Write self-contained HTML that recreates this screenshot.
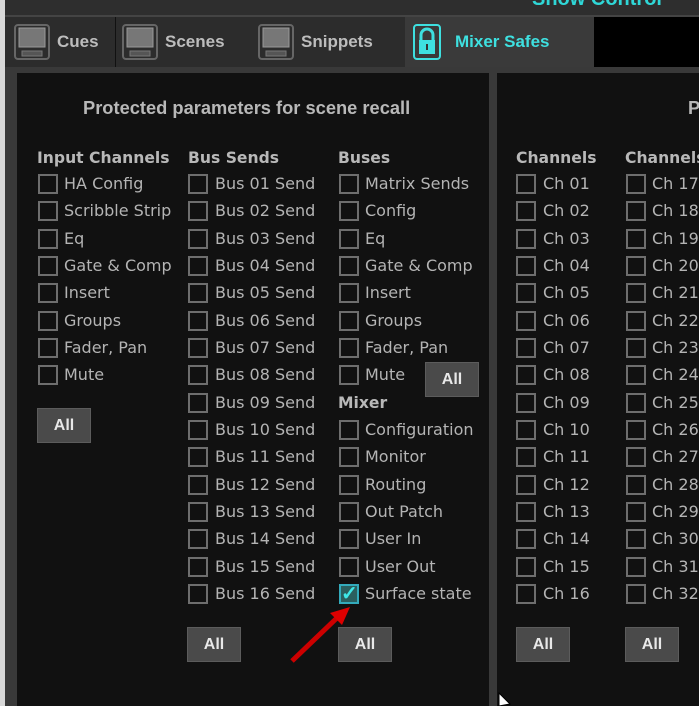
<!DOCTYPE html>
<html><head><style>
*{margin:0;padding:0;box-sizing:border-box}
body{width:699px;height:706px;overflow:hidden;background:#2b2b2b;position:relative;font-family:"DejaVu Sans",sans-serif}
.a{position:absolute}
.cb{position:absolute;width:20px;height:20px;border:2px solid #6e6e6e}
.t{position:absolute;color:#b4b4b4;font-size:16px;line-height:20px;white-space:nowrap}
.h{position:absolute;color:#b8b8b8;font-size:15.6px;font-weight:bold;line-height:20px;white-space:nowrap}
.btn{position:absolute;width:54px;height:35px;background:#4a4a4a;border:1px solid #5c5c5c;color:#e8e8e8;font:bold 16px "Liberation Sans",sans-serif;text-align:center;line-height:33px}
.tab{position:absolute;top:17px;height:50px;color:#bdbdbd;font:bold 17px "Liberation Sans",sans-serif;line-height:50px}
</style></head><body>
<div class="a" style="left:0;top:0;width:5px;height:706px;background:#d8d8d8"></div>
<div class="a" style="left:5px;top:0;width:694px;height:16px;background:#2e2e2e"></div>
<div class="a" style="left:532px;top:-12px;color:#2fd6d6;font:bold 20px 'Liberation Sans',sans-serif">Show Control</div>
<div class="a" style="left:5px;top:15px;width:694px;height:2px;background:#444"></div>
<div class="a" style="left:594px;top:17px;width:105px;height:50px;background:#000"></div>
<div class="a" style="left:5px;top:17px;width:400px;height:50px;background:#2c2c2c"></div>
<div class="a" style="left:115px;top:17px;width:1px;height:50px;background:#111"></div>
<div class="a" style="left:405px;top:17px;width:189px;height:50px;background:#3a3a3a"></div>
<div id="tabs"></div>
<div class="a" style="left:5px;top:67px;width:694px;height:639px;background:#393939"></div>
<div class="a" style="left:17px;top:73px;width:472px;height:633px;background:#111"></div>
<div class="a" style="left:497px;top:73px;width:202px;height:633px;background:#111"></div>
<div class="a" style="left:83px;top:97px;color:#b8b8b8;font:bold 18.3px 'Liberation Sans',sans-serif">Protected parameters for scene recall</div>
<div class="a" style="left:688px;top:97px;color:#b8b8b8;font:bold 18.3px 'Liberation Sans',sans-serif">P</div>
<div id="c"></div>
<svg class="a" style="left:280px;top:595px" width="80" height="80"><line x1="12" y1="66" x2="60" y2="20" stroke="#c00" stroke-width="5"/><polygon points="70,12 50,18 62,30" fill="#d00"/></svg>
<svg class="a" style="left:498px;top:692px" width="14" height="14"><polygon points="1,1 1,14 12,12" fill="#fff" stroke="#000"/></svg>
<script>
var c=document.getElementById('c'),h='';
function col(x,tx,items,y0){items.forEach(function(s,i){var y=y0+i*27.33;h+='<div class="cb" style="left:'+x+'px;top:'+(y-10)+'px"></div><div class="t" style="left:'+tx+'px;top:'+(y-10)+'px">'+s+'</div>';});}
function hd(x,y,s){h+='<div class="h" style="left:'+x+'px;top:'+(y-10)+'px">'+s+'</div>';}
function bt(x,y){h+='<div class="btn" style="left:'+x+'px;top:'+y+'px">All</div>';}
hd(37,158,'Input Channels');hd(188,158,'Bus Sends');hd(338,158,'Buses');hd(516,158,'Channels');hd(625,158,'Channels');
col(38,64,['HA Config','Scribble Strip','Eq','Gate &amp; Comp','Insert','Groups','Fader, Pan','Mute'],184);
var b=[];for(var i=1;i<=16;i++)b.push('Bus '+(i<10?'0':'')+i+' Send');col(188,215,b,184);
col(339,365,['Matrix Sends','Config','Eq','Gate &amp; Comp','Insert','Groups','Fader, Pan','Mute'],184);
hd(338,403,'Mixer');
col(339,365,['Configuration','Monitor','Routing','Out Patch','User In','User Out','Surface state'],430);
var a=[],d=[];for(i=1;i<=16;i++){a.push('Ch '+(i<10?'0':'')+i);d.push('Ch '+(i+16));}
col(516,543,a,184);col(626,652,d,184);
bt(37,408);bt(425,362);bt(187,627);bt(338,627);bt(516,627);bt(625,627);
h+='<div class="a" style="left:339px;top:584px;width:20px;height:20px;background:#2a5f5f;border:2px solid #3ab;color:#3ee8e8;font:bold 20px sans-serif;line-height:16px;text-align:center">✓</div>';
c.innerHTML=h;
var t='',ic=function(x){return '<svg class="a" style="left:'+x+'px;top:24px" width="36" height="36"><rect x="1" y="1" width="34" height="34" rx="3" fill="none" stroke="#666" stroke-width="2"/><rect x="5" y="4" width="26" height="19" fill="#777" stroke="#999"/><rect x="8" y="27" width="20" height="5" fill="#555" stroke="#777"/></svg>';};
t+=ic(14)+'<div class="tab" style="left:57px">Cues</div>';
t+=ic(122)+'<div class="tab" style="left:165px">Scenes</div>';
t+=ic(258)+'<div class="tab" style="left:301px">Snippets</div>';
t+='<svg class="a" style="left:413px;top:24px" width="36" height="36"><rect x="1" y="1" width="26" height="34" rx="3" fill="none" stroke="#3ee0e0" stroke-width="2"/><path d="M8 16V11a6 6 0 0 1 12 0v5" fill="none" stroke="#3ee0e0" stroke-width="3"/><rect x="6" y="16" width="16" height="14" fill="#3ee0e0"/><rect x="13" y="20" width="2" height="6" fill="#333"/></svg>';
t+='<div class="tab" style="left:455px;color:#3ee0e0">Mixer Safes</div>';
document.getElementById('tabs').innerHTML=t;
</script>
</body></html>
